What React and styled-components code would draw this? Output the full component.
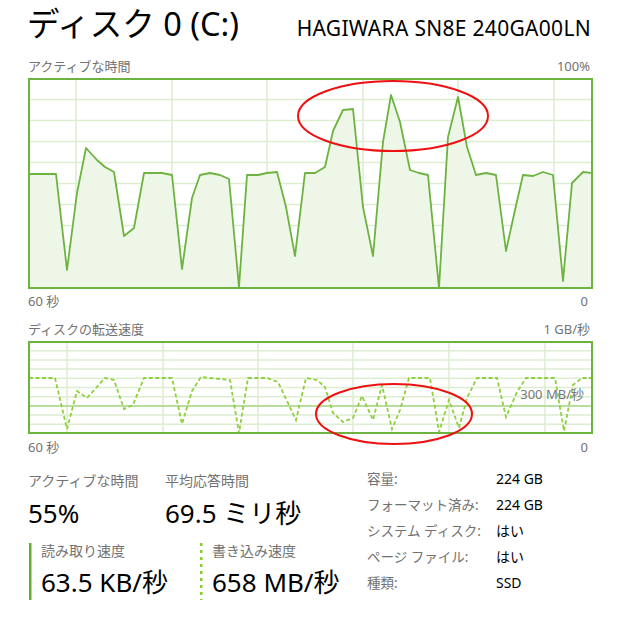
import React from 'react';
import styled, {createGlobalStyle} from "styled-components";

const GlobalStyle = createGlobalStyle`
  html, body {
    margin: 0;
    padding: 0;
    background: #ffffff;
  }
  body {
    font-family: "Noto Sans", "Noto Sans CJK JP", sans-serif;
    color: #000;
  }
`

const GREEN = '#6cb33f'
const GRID = '#dcedd0'

const activePoints = [
    [28, 174], [56, 174], [67, 270], [77, 193], [86, 148], [97, 160], [105, 167], [114, 172], [124, 236], [134, 228],
    [144, 173], [162, 173], [172, 175], [182, 269], [192, 198], [200, 175], [210, 173], [220, 175], [229, 179],
    [239, 287], [247, 175], [258, 175], [267, 173], [277, 172], [286, 207], [295, 256], [305, 173], [315, 173],
    [325, 167], [333, 131], [343, 110], [353, 109], [363, 207], [373, 256], [383, 142], [391, 95], [400, 122],
    [410, 170], [419, 173], [428, 175], [439, 288], [448, 137], [458, 97], [467, 147], [476, 175], [486, 173],
    [496, 175], [506, 251], [515, 210], [523, 175], [533, 176], [543, 172], [553, 175], [563, 281], [572, 183],
    [583, 172], [592, 173],
]

const writePoints = [
    [29, 378], [55, 378], [67, 429], [77, 391], [87, 398], [105, 378], [114, 380], [124, 409], [133, 405], [144, 378],
    [172, 378], [182, 424], [192, 391], [201, 377], [210, 378], [230, 380], [239, 433], [248, 378], [267, 378],
    [278, 382], [296, 420], [306, 378], [317, 380], [325, 387], [333, 413], [343, 422], [353, 418], [362, 396],
    [373, 420], [382, 385], [392, 429], [400, 410], [409, 378], [430, 378], [439, 432], [449, 400], [459, 428],
    [467, 398], [477, 378], [497, 378], [506, 417], [517, 392], [526, 378], [555, 378], [564, 431], [573, 385],
    [582, 378], [592, 378],
]

const toStr = (pts) => pts.map(p => p.join(',')).join(' ')

function Graph({top, height, rowLines, colLines, children}) {
    const x0 = 30
    const y0 = top + 2
    const w = 561
    const h = height - 4
    return (
        <GraphBox $height={height}>
            <svg width={w} height={h} viewBox={`${x0} ${y0} ${w} ${h}`}>
                {rowLines.map(y => (
                    <line key={'r' + y} x1={x0} x2={x0 + w} y1={y} y2={y} stroke={GRID} strokeWidth="1.5"/>
                ))}
                {colLines.map(x => (
                    <line key={'c' + x} x1={x} x2={x} y1={y0} y2={y0 + h} stroke={GRID} strokeWidth="1.5"/>
                ))}
                {children}
            </svg>
        </GraphBox>
    )
}

function App() {
    const rows1 = Array.from({length: 9}, (_, i) => 78.5 + 21 * (i + 1))
    const rows2 = Array.from({length: 9}, (_, i) => 341.5 + 9.2 * (i + 1))

    return (
        <Page>
            <GlobalStyle/>
            <Header>
                <Title>ディスク 0 (C:)</Title>
                <Model>HAGIWARA SN8E 240GA00LN</Model>
            </Header>

            <LabelRow>
                <span>アクティブな時間</span>
                <span>100%</span>
            </LabelRow>
            <Graph top={78} height={211} rowLines={rows1} colLines={[76, 172, 267, 363, 458, 554]}>
                <polygon points={toStr([...activePoints, [592, 290], [28, 290]])} fill="#eef6e8"/>
                <polyline points={toStr(activePoints)} fill="none" stroke={GREEN} strokeWidth="1.8"
                          strokeLinejoin="round"/>
            </Graph>
            <AxisRow>
                <span>60 秒</span>
                <span>0</span>
            </AxisRow>

            <LabelRow $gap>
                <span>ディスクの転送速度</span>
                <span>1 GB/秒</span>
            </LabelRow>
            <Graph top={341} height={93} rowLines={rows2} colLines={[67, 163, 258, 353, 449, 545]}>
                <line x1="30" x2="591" y1="406" y2="406" stroke="#a9d68a" strokeWidth="1.5"/>
                <polyline points={toStr(writePoints)} fill="none" stroke="#8fd03e" strokeWidth="1.8"
                          strokeDasharray="4 2.5"/>
                <text x="584" y="399" textAnchor="end" fontSize="13" fill="#777"
                      fontFamily='"Noto Sans", "Noto Sans CJK JP", sans-serif'>300 MB/秒</text>
            </Graph>
            <AxisRow $second>
                <span>60 秒</span>
                <span>0</span>
            </AxisRow>

            <Stats>
                <LeftStats>
                    <StatBlock $width={137}>
                        <StatLabel>アクティブな時間</StatLabel>
                        <StatValue>55%</StatValue>
                    </StatBlock>
                    <StatBlock>
                        <StatLabel>平均応答時間</StatLabel>
                        <StatValue>69.5 ミリ秒</StatValue>
                    </StatBlock>
                    <SpeedBlock $width={170}>
                        <StatLabel>読み取り速度</StatLabel>
                        <StatValue>63.5 KB/秒</StatValue>
                    </SpeedBlock>
                    <SpeedBlock $dotted>
                        <StatLabel>書き込み速度</StatLabel>
                        <StatValue>658 MB/秒</StatValue>
                    </SpeedBlock>
                </LeftStats>
                <Details>
                    <DetailKey>容量:</DetailKey>
                    <DetailValue>224 GB</DetailValue>
                    <DetailKey>フォーマット済み:</DetailKey>
                    <DetailValue>224 GB</DetailValue>
                    <DetailKey>システム ディスク:</DetailKey>
                    <DetailValue>はい</DetailValue>
                    <DetailKey>ページ ファイル:</DetailKey>
                    <DetailValue>はい</DetailValue>
                    <DetailKey>種類:</DetailKey>
                    <DetailValue>SSD</DetailValue>
                </Details>
            </Stats>

            <Marks width="629" height="629" viewBox="0 0 629 629">
                <ellipse cx="393" cy="116" rx="95" ry="35" fill="none" stroke="#ee1111" strokeWidth="2"/>
                <ellipse cx="394" cy="414" rx="78" ry="30" fill="none" stroke="#ee1111" strokeWidth="2"/>
            </Marks>
        </Page>
    );
}

export default App;


const Page = styled.div`
  position: relative;
  width: 629px;
  height: 629px;
  box-sizing: border-box;
  padding: 0 36px 0 28px;
  overflow: hidden;
`

const Header = styled.div`
  height: 58px;
  box-sizing: border-box;
  padding-top: 2px;
  display: flex;
  align-items: baseline;
  justify-content: space-between;
  padding-right: 2px;
`

const Title = styled.div`
  font-size: 32.5px;
  line-height: 44px;
  margin-left: -1px;
`

const Model = styled.div`
  font-size: 21px;
  letter-spacing: 0.3px;
  line-height: 44px;
`

const LabelRow = styled.div`
  display: flex;
  justify-content: space-between;
  font-size: 13px;
  line-height: 16px;
  height: 16px;
  color: #727272;
  margin-top: ${p => p.$gap ? '12px' : '0'};
  margin-bottom: 4px;
  padding-right: 3px;
`

const GraphBox = styled.div`
  width: 565px;
  height: ${p => p.$height}px;
  box-sizing: border-box;
  border: 2px solid ${GREEN};
  background: #fff;

  > svg {
    display: block;
  }
`

const AxisRow = styled.div`
  display: flex;
  justify-content: space-between;
  font-size: 13px;
  line-height: 16px;
  color: #727272;
  margin-top: ${p => p.$second ? '5px' : '4px'};
  padding-right: 5px;
`

const Stats = styled.div`
  display: flex;
  margin-top: 17px;
`

const LeftStats = styled.div`
  width: 339px;
  display: flex;
  flex-wrap: wrap;
  align-content: flex-start;
`

const StatBlock = styled.div`
  width: ${p => p.$width ? p.$width + 'px' : 'auto'};
  display: flex;
  flex-direction: column;
  gap: 7px;
  margin-bottom: 16px;
`

const SpeedBlock = styled.div`
  width: ${p => p.$width ? p.$width + 'px' : 'auto'};
  box-sizing: border-box;
  display: flex;
  flex-direction: column;
  gap: 7px;
  padding: 0 0 2px 12px;
  margin-left: 1px;
  background-image: ${p => p.$dotted
          ? 'repeating-linear-gradient(to bottom, #86d02e 0 3px, transparent 3px 7px)'
          : 'linear-gradient(#5cb22a, #5cb22a)'};
  background-size: 2.5px 100%;
  background-repeat: no-repeat;
  margin-top: -2px;

  & > div:first-child {
    line-height: 16px;
  }
`

const StatLabel = styled.div`
  font-size: 14px;
  line-height: 18px;
  color: #727272;
`

const StatValue = styled.div`
  font-size: 26px;
  line-height: 32px;
`

const Details = styled.div`
  display: grid;
  grid-template-columns: 129px auto;
  grid-auto-rows: 26px;
  align-items: center;
  margin-top: -7px;
`

const DetailKey = styled.div`
  font-size: 13.5px;
  color: #727272;
  white-space: nowrap;
`

const DetailValue = styled.div`
  font-size: 14px;
  color: #000;
`

const Marks = styled.svg`
  position: absolute;
  left: 0;
  top: 0;
  pointer-events: none;
`
